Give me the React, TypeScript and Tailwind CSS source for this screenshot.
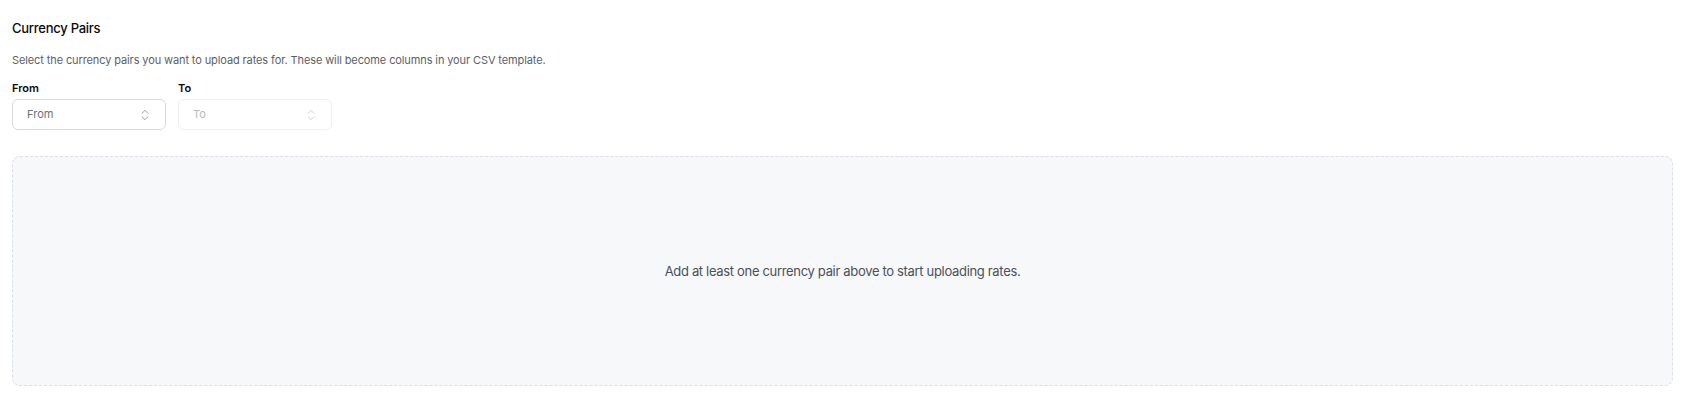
import React from 'react';
import { ChevronsUpDown } from 'lucide-react';

const SelectBox = ({ label, placeholder, disabled }: { label: string; placeholder: string; disabled?: boolean }) => (
  <div className="flex flex-col">
    <label className="text-[11px] font-semibold leading-4 text-[#0a0a0a]">{label}</label>
    <button
      type="button"
      disabled={disabled}
      className={`mt-[3px] flex h-[31px] w-[154px] items-center justify-between rounded-md border bg-white pl-[14px] pr-[13px] text-[11px] ${
        disabled ? 'border-[#eceef1] text-[#b4b8bf]' : 'border-[#d7dade] text-[#6b6f76]'
      }`}
    >
      <span>{placeholder}</span>
      <ChevronsUpDown size={14} strokeWidth={1.5} className={disabled ? 'text-[#c6c9ce]' : 'text-[#8a8e95]'} />
    </button>
  </div>
);

export default function App() {
  return (
    <div className="min-h-screen bg-white pl-3 pr-2 pt-[18px] font-['Inter',sans-serif]">
      <h3 className="text-[13px] font-medium leading-5 tracking-[-0.02em] text-[#0a0a0a]">Currency Pairs</h3>
      <p className="mt-[14px] text-[11px] leading-4 tracking-[-0.01em] text-[#5b5f66]">
        Select the currency pairs you want to upload rates for. These will become columns in your CSV template.
      </p>
      <div className="mt-3 flex gap-3">
        <SelectBox label="From" placeholder="From" />
        <SelectBox label="To" placeholder="To" disabled />
      </div>
      <div className="mt-[26px] flex h-[230px] items-center justify-center rounded-lg border border-dashed border-[#dcdfe3] bg-[#f7f8f9]">
        <p className="text-[13px] leading-5 tracking-[-0.025em] text-[#4b5059]">
          Add at least one currency pair above to start uploading rates.
        </p>
      </div>
    </div>
  );
}
